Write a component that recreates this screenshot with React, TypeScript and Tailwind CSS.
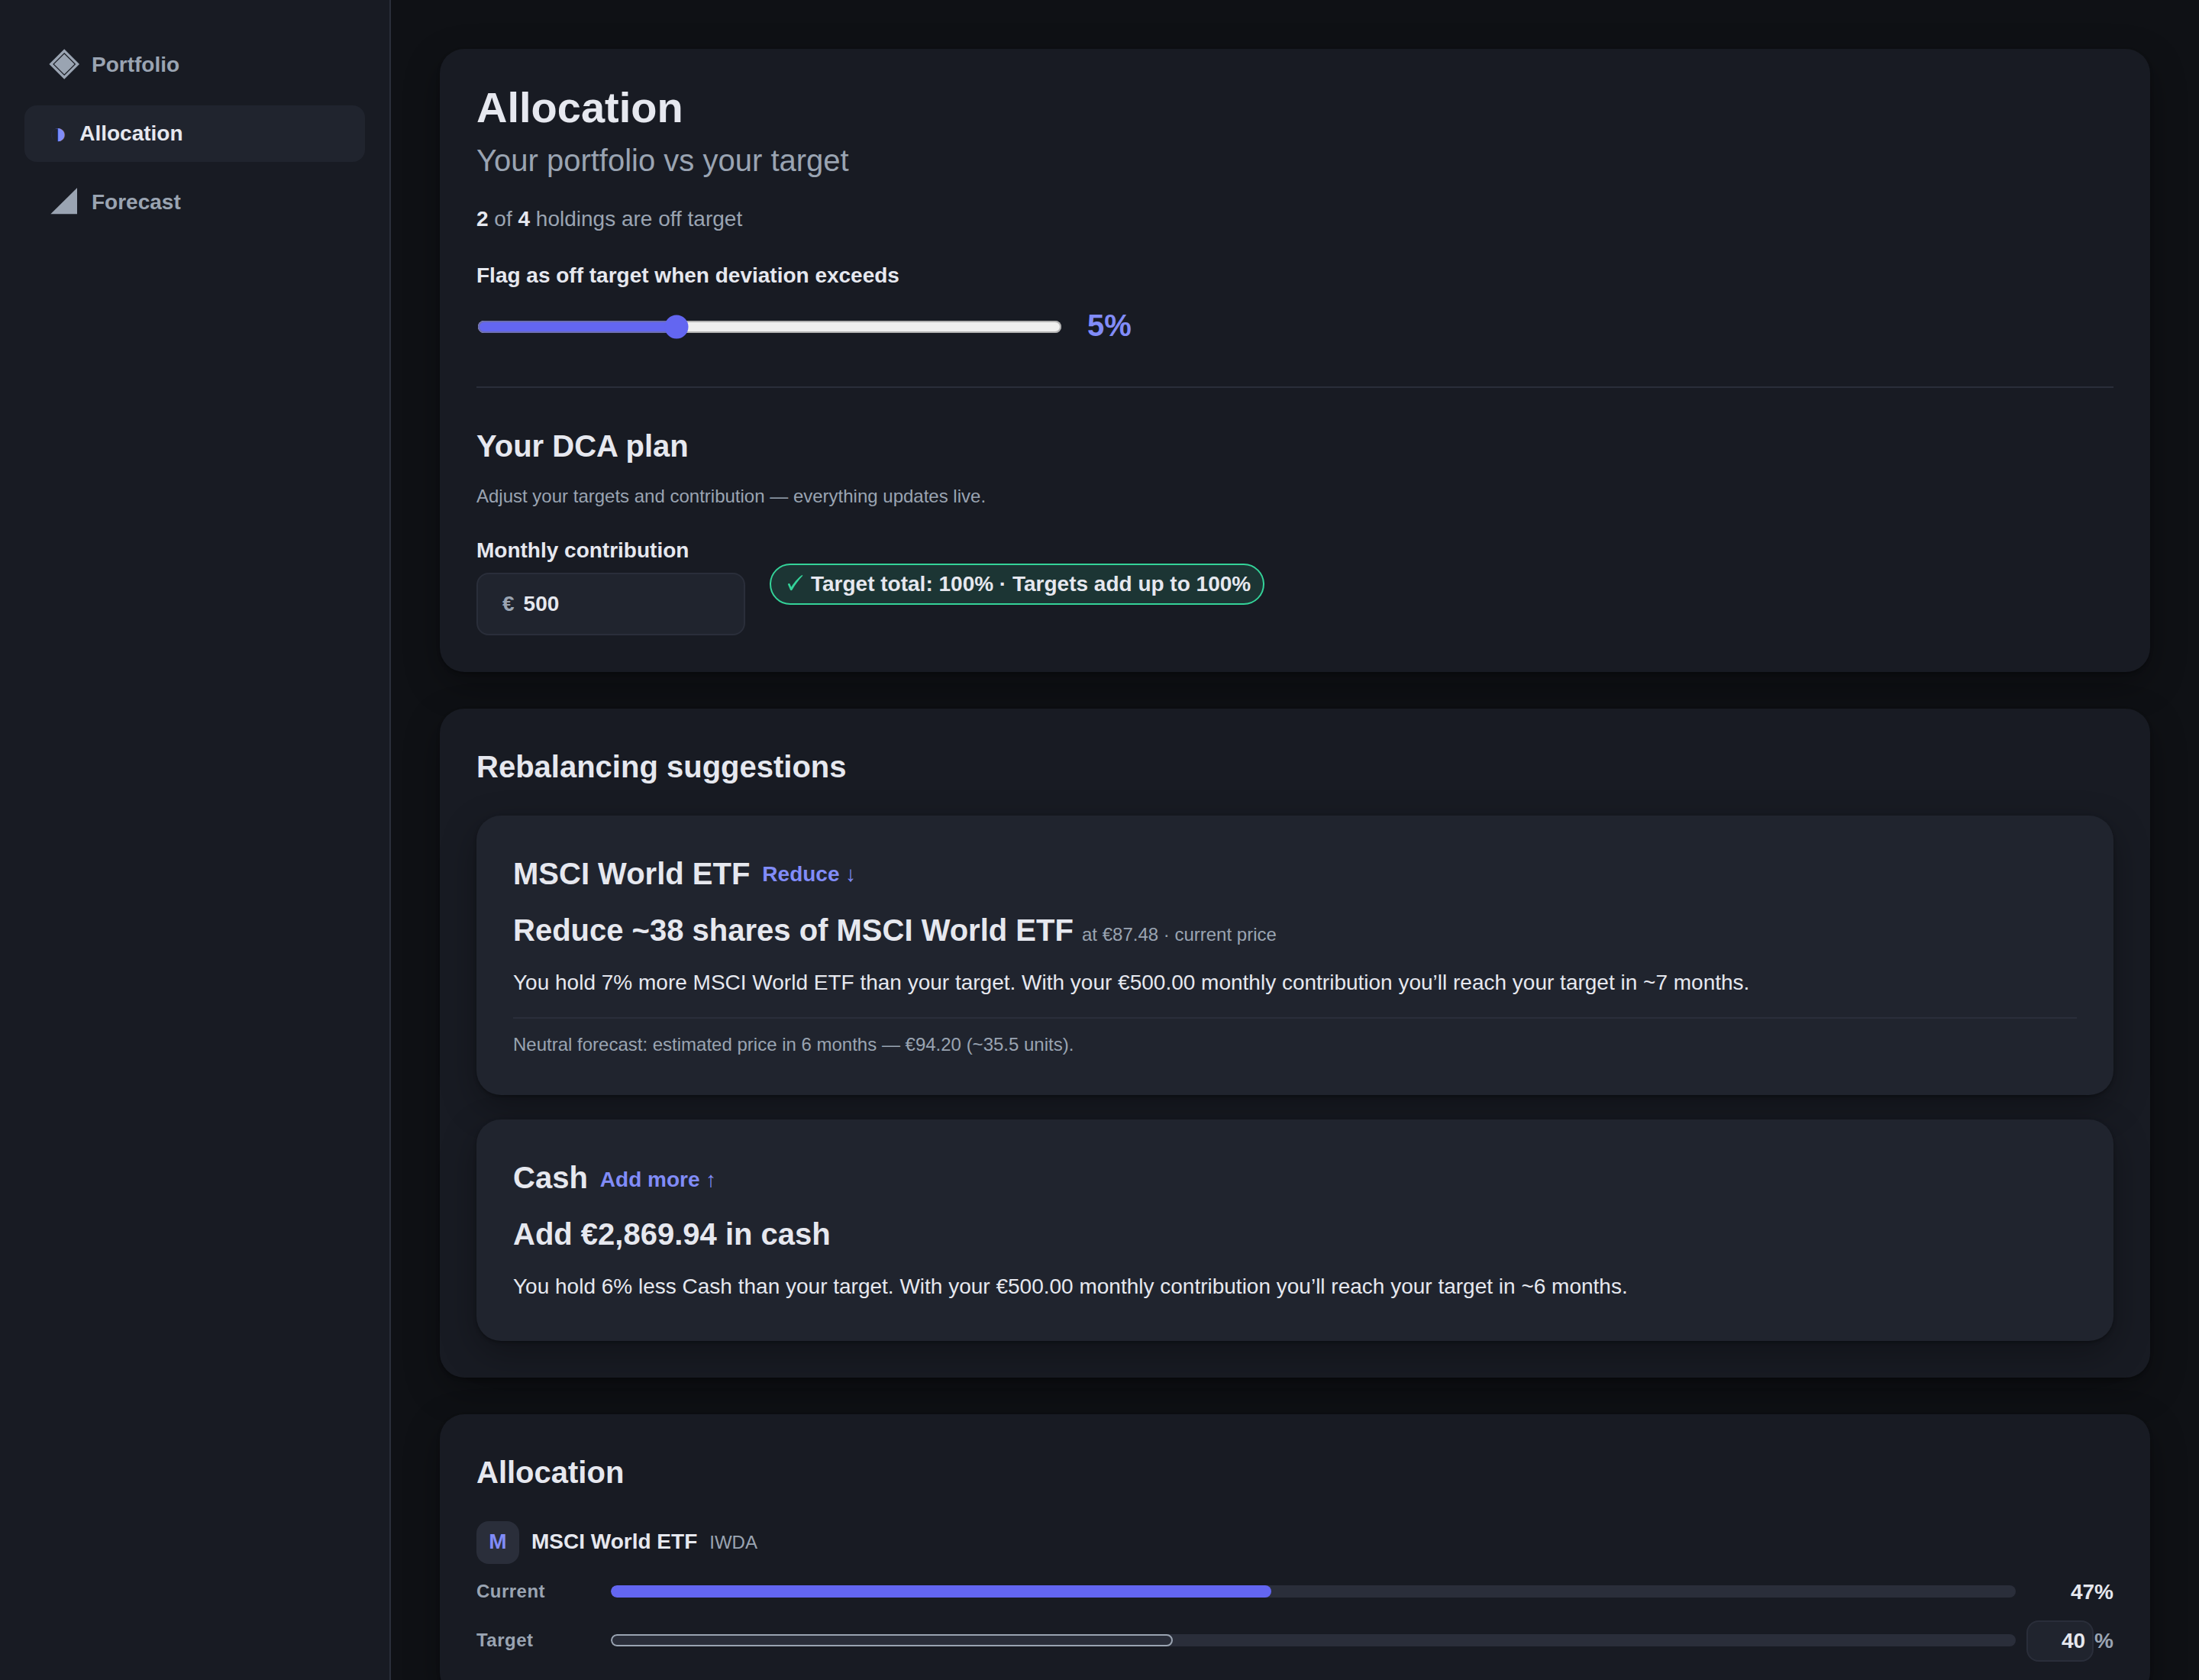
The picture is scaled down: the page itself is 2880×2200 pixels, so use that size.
import React from 'react';

interface NavItem {
  icon: React.ReactNode;
  label: string;
  active?: boolean;
}

interface Suggestion {
  name: string;
  action: string;
  actionClass: string;
  headline: string;
  priceNote?: string;
  body: string;
  forecast?: string;
}

const DiamondIcon: React.FC = () => (
  <svg viewBox="0 0 40 40" fill="currentColor" className="-mt-[3px] size-10 shrink-0">
    <path fillRule="evenodd" d="M20.2 0.2 L40 20 L20.2 39.8 L0.4 20 Z M20.2 5 L5.2 20 L20.2 35 L35.2 20 Z" />
    <path d="M20.2 6.7 L33.5 20 L20.2 33.3 L6.9 20 Z" />
  </svg>
);

const TriangleIcon: React.FC = () => (
  <svg viewBox="0 0 40 40" fill="currentColor" className="size-10 shrink-0">
    <path d="M2.3 35.3 L37 35.3 L37 1 Z" />
  </svg>
);

const CheckIcon: React.FC = () => (
  <svg viewBox="0 0 28 28" fill="currentColor" className="mr-2 size-7 shrink-0 text-[#34d399]">
    <path d="M5.8 14 C6.8 12.6 8.3 12.7 8.8 14.2 L10.2 17.8 C14 12 19 6 24.4 2.1 L25.4 2.8 C20 8.5 15 15 11.5 21.6 C10.8 22.6 9.6 22.6 9 21.6 Z" />
  </svg>
);

const navItems: NavItem[] = [
  { icon: <DiamondIcon />, label: 'Portfolio' },
  {
    icon: <span className="-mt-[2px] text-[40px] leading-[40px] text-[#818cf8]">◑</span>,
    label: 'Allocation',
    active: true,
  },
  { icon: <TriangleIcon />, label: 'Forecast' },
];

const suggestions: Suggestion[] = [
  {
    name: 'MSCI World ETF',
    action: 'Reduce ↓',
    actionClass: 'mt-[2px]',
    headline: 'Reduce ~38 shares of MSCI World ETF',
    priceNote: 'at €87.48 · current price',
    body: 'You hold 7% more MSCI World ETF than your target. With your €500.00 monthly contribution you’ll reach your target in ~7 months.',
    forecast: 'Neutral forecast: estimated price in 6 months — €94.20 (~35.5 units).',
  },
  {
    name: 'Cash',
    action: 'Add more ↑',
    actionClass: 'mt-[5px]',
    headline: 'Add €2,869.94 in cash',
    body: 'You hold 6% less Cash than your target. With your €500.00 monthly contribution you’ll reach your target in ~6 months.',
  },
];

const Sidebar: React.FC = () => (
  <nav className="flex w-[512px] shrink-0 flex-col gap-4 border-r-2 border-[#2a2e3a] bg-[#181b23] px-8 py-12">
    {navItems.map((item) => (
      <a
        key={item.label}
        className={`flex h-[74px] items-center gap-4 rounded-2xl px-8 text-[28px] leading-[42px] font-bold ${
          item.active ? 'bg-[#20242e] text-[#e6e8ef]' : 'text-[#9aa4b2]'
        }`}
      >
        {item.icon}
        {item.label}
      </a>
    ))}
  </nav>
);

const Card: React.FC<{ children: React.ReactNode }> = ({ children }) => (
  <section className="shrink-0 rounded-[32px] bg-[#181b23] p-12 shadow-[0_2px_4px_rgba(0,0,0,0.3),0_16px_48px_rgba(0,0,0,0.3)]">
    {children}
  </section>
);

const SuggestionCard: React.FC<{ suggestion: Suggestion }> = ({ suggestion }) => (
  <article className="rounded-[32px] bg-[#20242e] p-12 shadow-[0_2px_4px_rgba(0,0,0,0.3),0_16px_48px_rgba(0,0,0,0.3)]">
    <div className="flex h-14 items-center gap-4">
      <h3 className="text-[40px] leading-[56px] font-bold">{suggestion.name}</h3>
      <span className={`text-[28px] leading-[42px] font-bold text-[#818cf8] ${suggestion.actionClass}`}>
        {suggestion.action}
      </span>
    </div>
    <p className="mt-4 h-[60px] text-[40px] leading-[60px] font-bold">
      {suggestion.headline}{' '}
      {suggestion.priceNote && (
        <span className="text-[24px] leading-none font-normal text-[#9aa4b2]">{suggestion.priceNote}</span>
      )}
    </p>
    <p className="mt-4 h-[46px] text-[28px] leading-[45px]">{suggestion.body}</p>
    {suggestion.forecast && (
      <p className="mt-[22px] border-t-2 border-[#2a2e3a] pt-4 text-[24px] leading-[36px] text-[#9aa4b2]">
        {suggestion.forecast}
      </p>
    )}
  </article>
);

const App: React.FC = () => {
  const deviation = 5;
  const current = 47;
  const target = 40;

  return (
    <div className="flex h-[2200px] w-[2880px] overflow-hidden bg-[#0f1115] font-['Liberation_Sans',Arial,sans-serif] text-[#e6e8ef]">
      <Sidebar />

      <main className="flex flex-1 flex-col gap-12 p-16">
        <Card>
          <h1 className="text-[56px] leading-[58px] font-bold">Allocation</h1>
          <p className="mt-2.5 text-[40px] leading-[60px] text-[#9aa4b2]">Your portfolio vs your target</p>
          <p className="mt-[26px] text-[28px] leading-[42px] text-[#9aa4b2]">
            <strong className="text-[#e6e8ef]">2</strong> of <strong className="text-[#e6e8ef]">4</strong> holdings are
            off target
          </p>
          <label className="mt-8 block text-[28px] leading-[42px] font-bold">
            Flag as off target when deviation exceeds
          </label>
          <div className="mt-[14px] flex h-[60px] items-center gap-8">
            {/* zoomed so the native thumb and track grow with the text */}
            <input
              type="range"
              min={0}
              max={15}
              defaultValue={deviation}
              className="mx-[0.5px] mt-[2px] w-[383px] accent-[#6366f1] [zoom:2]"
            />
            <output className="text-[40px] leading-[60px] font-bold text-[#818cf8]">{deviation}%</output>
          </div>

          <div className="mt-[50px] border-t-2 border-[#2a2e3a] pt-12">
            <h2 className="text-[40px] leading-[56px] font-bold">Your DCA plan</h2>
            <p className="mt-5 text-[24px] leading-[36px] text-[#9aa4b2]">
              Adjust your targets and contribution — everything updates live.
            </p>
            <div className="mt-8 flex items-center gap-8">
              <div className="w-[352px]">
                <div className="text-[28px] leading-[42px] font-bold">Monthly contribution</div>
                <div className="mt-2 flex h-[82px] items-center gap-3 rounded-2xl border-2 border-[#2a2e3a] bg-[#20242e] px-8 text-[28px] leading-[42px] font-bold">
                  <span className="text-[#9aa4b2]">€</span>
                  <span>500</span>
                </div>
              </div>
              <div className="-mt-[2px] flex h-[54px] items-center rounded-full border-2 border-[#34d399] bg-[#34d399]/15 px-4 text-[28px] leading-[42px] font-bold">
                <CheckIcon />
                Target total: 100% · Targets add up to 100%
              </div>
            </div>
          </div>
        </Card>

        <Card>
          <h2 className="text-[40px] leading-[56px] font-bold">Rebalancing suggestions</h2>
          <div className="mt-9 flex flex-col gap-8">
            {suggestions.map((suggestion) => (
              <SuggestionCard key={suggestion.name} suggestion={suggestion} />
            ))}
          </div>
        </Card>

        <Card>
          <h2 className="text-[40px] leading-[56px] font-bold">Allocation</h2>
          <div className="mt-9 flex items-center gap-4">
            <span className="flex size-14 items-center justify-center rounded-2xl bg-[#2a2e3a] pb-[3px] text-[28px] leading-[42px] font-bold text-[#818cf8]">
              M
            </span>
            <div className="flex items-baseline gap-4 pb-[3px]">
              <span className="text-[28px] leading-[42px] font-bold">MSCI World ETF</span>
              <span className="text-[24px] leading-[36px] text-[#9aa4b2]">IWDA</span>
            </div>
          </div>

          <div className="mt-4 flex h-10 items-center gap-4">
            <span className="w-40 text-[24px] leading-[36px] font-bold tracking-[0.02em] text-[#9aa4b2]">Current</span>
            <div className="h-4 flex-1 overflow-hidden rounded-full bg-[#2a2e3a]">
              <div className="h-full rounded-full bg-[#6366f1]" style={{ width: `${current}%` }} />
            </div>
            <span className="w-28 pt-px text-right text-[28px] leading-[42px] font-bold">{current}%</span>
          </div>

          <div className="mt-[18px] flex h-[52px] items-center gap-4">
            <span className="w-40 text-[24px] leading-[36px] font-bold tracking-[0.02em] text-[#9aa4b2]">Target</span>
            <div className="h-4 flex-1 overflow-hidden rounded-full bg-[#2a2e3a]">
              <div className="h-full rounded-full border-2 border-[#9aa4b2]" style={{ width: `${target}%` }} />
            </div>
            <div className="flex w-28 items-center justify-end gap-px pt-[2px] text-[28px] leading-[42px] font-bold">
              <span className="flex h-[54px] w-[88px] shrink-0 items-center justify-end rounded-2xl border-2 border-[#2a2e3a] bg-[#20242e] pr-[9px]">
                {target}
              </span>
              <span className="text-[#9aa4b2]">%</span>
            </div>
          </div>
        </Card>
      </main>
    </div>
  );
};

export default App;
